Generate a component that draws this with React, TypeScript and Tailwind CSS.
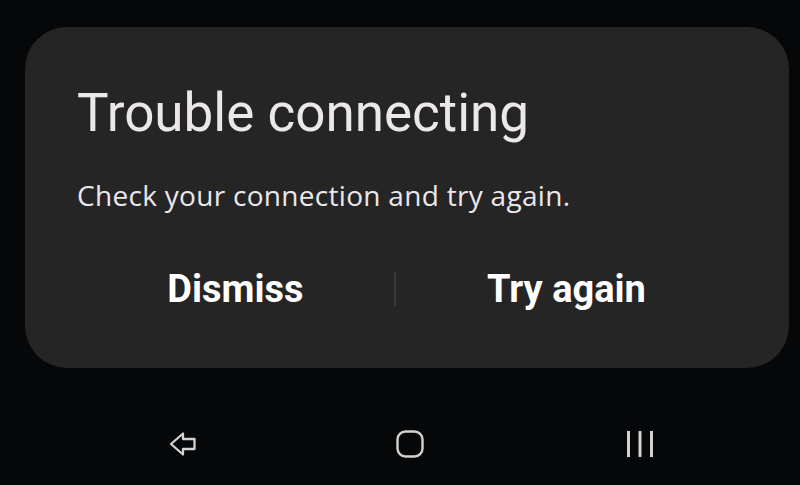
import React from 'react'

const BackIcon = () => (
  <svg width="28" height="26" viewBox="0 0 28 26" fill="none">
    <path
      d="M2 13 L14 2.5 L14 8 L25.5 8 L25.5 18 L14 18 L14 23.5 Z"
      stroke="#d2d2d2"
      strokeWidth="2.3"
      strokeLinejoin="round"
    />
  </svg>
)

const HomeIcon = () => (
  <svg width="28" height="28" viewBox="0 0 28 28" fill="none">
    <rect x="1.5" y="1.5" width="25" height="25" rx="8" stroke="#d2d2d2" strokeWidth="2.4" />
  </svg>
)

const RecentsIcon = () => (
  <svg width="28" height="28" viewBox="0 0 28 28" fill="none">
    <rect x="1" y="1" width="3" height="26" fill="#d2d2d2" />
    <rect x="12.5" y="1" width="3" height="26" fill="#d2d2d2" />
    <rect x="24" y="1" width="3" height="26" fill="#d2d2d2" />
  </svg>
)

export default function App() {
  return (
    <div
      className="w-[800px] h-[485px] bg-[#060709] flex flex-col overflow-hidden"
      style={{ fontFamily: 'Roboto, "Liberation Sans", sans-serif' }}
    >
      <div className="pt-[27px] pl-[25px] pr-[11px]">
        <div className="h-[341px] rounded-[42px] bg-[#252525] px-[52px] pt-[64px]">
          <h1 className="text-[53px] leading-none text-[#ebe7eb] font-normal -mt-[4px]">
            Trouble connecting
          </h1>
          <p className="mt-[41px] text-[28px] leading-none tracking-[0.3px] text-[#ebe7eb] font-['Open_Sans',sans-serif]">
            Check your connection and try again.
          </p>
          <div className="mt-[61px] flex items-center">
            <button className="w-[317px] text-center text-[38px] font-bold text-white leading-none">
              Dismiss
            </button>
            <div className="w-[2px] h-[34px] bg-[#393939]" />
            <button className="flex-1 text-center text-[38px] font-bold text-white leading-none">
              Try again
            </button>
          </div>
        </div>
      </div>
      <div className="flex-1 flex items-center pl-[169px] pt-[35px]">
        <BackIcon />
        <div className="ml-[199px]">
          <HomeIcon />
        </div>
        <div className="ml-[202px]">
          <RecentsIcon />
        </div>
      </div>
    </div>
  )
}
